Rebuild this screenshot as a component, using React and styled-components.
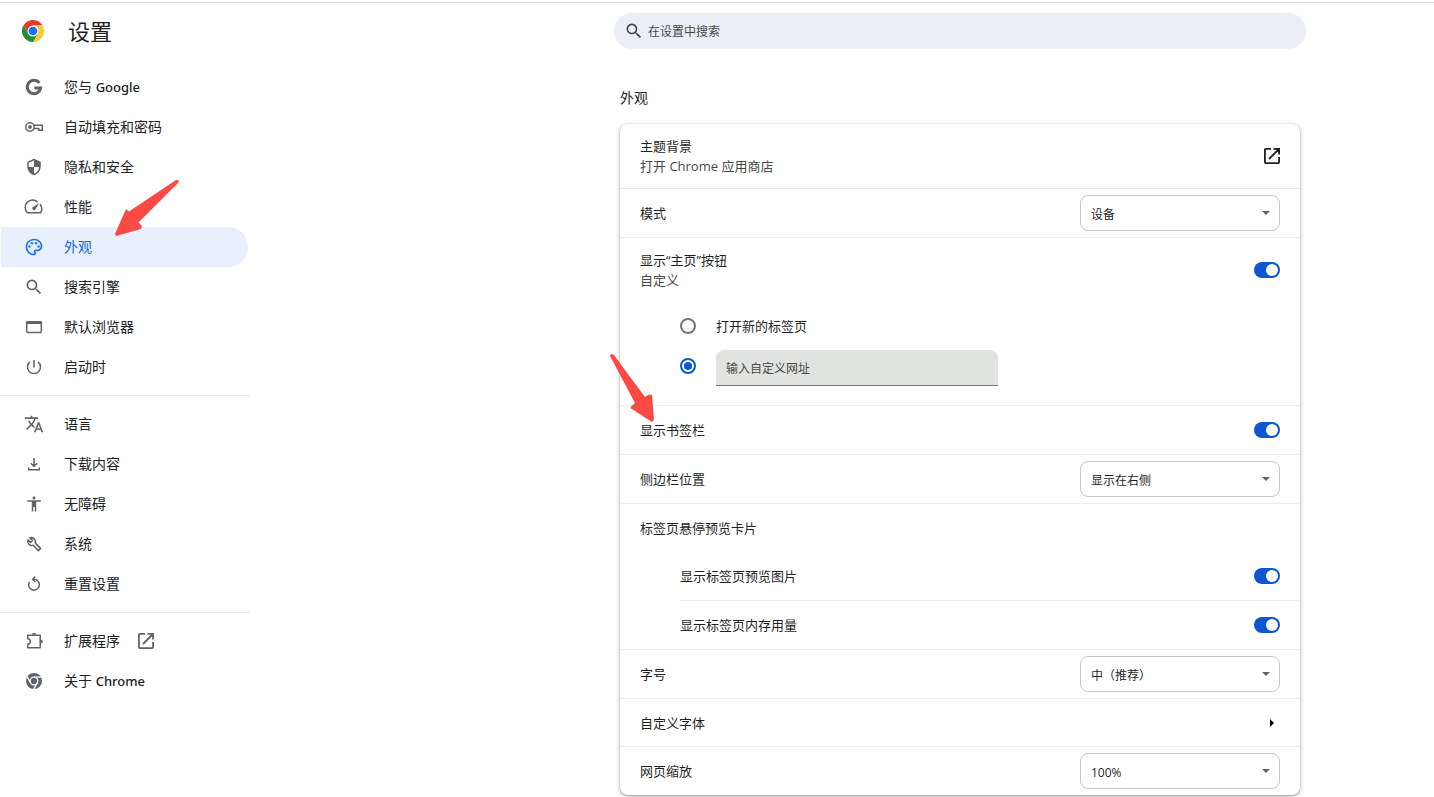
import React, { useState } from 'react';
import styled, { createGlobalStyle } from 'styled-components'
import { MdSecurity, MdOutlinePalette, MdSearch, MdTranslate, MdAccessibility } from 'react-icons/md'

const GlobalStyle = createGlobalStyle`
  * {
    box-sizing: border-box;
  }

  body {
    margin: 0;
    background: #fff;
    color: #1f1f1f;
    font-family: "Open Sans", "Noto Sans CJK SC", sans-serif;
    font-size: 13px;
    line-height: 20px;
  }

  button, input, select {
    font-family: inherit;
    color: inherit;
  }
`

//icons
const LineIcon = ({ children, strokeWidth = 1.5 }) => (
  <svg viewBox="0 0 20 20" width="20" height="20" fill="none" stroke="currentColor" strokeWidth={strokeWidth}>
    {children}
  </svg>
)

const GoogleIcon = () => (
  <LineIcon strokeWidth={3}>
    <path d="M15.300 5.900A6.700 6.700 0 1 0 16.600 11.100H10.300" />
  </LineIcon>
)

const KeyIcon = () => (
  <LineIcon>
    <circle cx="6" cy="10" r="4.200" />
    <circle cx="6" cy="10" r="1.900" fill="currentColor" stroke="none" />
    <path d="M9.800 8.200H18.300V13.300H14.800V11.400H9.800" />
  </LineIcon>
)

const GaugeIcon = () => (
  <LineIcon>
    <path d="M16 7.200A7.300 7.300 0 0 1 16.600 15.700H3.400A7.300 7.300 0 0 1 13.600 5.100" />
    <path d="M15.300 6L11.500 12.300a1.700 1.700 0 1 1-2.500-2.200z" fill="currentColor" stroke="none" />
  </LineIcon>
)

const WindowIcon = () => (
  <LineIcon>
    <rect x="2.700" y="4.700" width="14.600" height="10.800" rx="1" />
    <path d="M2.500 5.500h15" strokeWidth="3" />
  </LineIcon>
)

const PowerIcon = () => (
  <LineIcon>
    <path d="M10 3v7.500M6 4.900a6.500 6.500 0 1 0 8 0" />
  </LineIcon>
)

const DownloadIcon = () => (
  <LineIcon>
    <path d="M10 4v8.500M6.800 9.200L10 12.400l3.200-3.200M4.700 13.500v2.200h10.600v-2.200" />
  </LineIcon>
)

const WrenchIcon = () => (
  <LineIcon>
    <path d="M3.900 5.900L6.500 8.500 8.500 6.500 5.900 3.900A4.200 4.200 0 0 1 11.300 9.100L16.600 14.400 14.400 16.600 9.100 11.300A4.200 4.200 0 0 1 3.900 5.900z" strokeLinejoin="round" />
  </LineIcon>
)

const ResetIcon = () => (
  <LineIcon>
    <path d="M9.500 5.300h.5a5.400 5.400 0 1 1-4.600 2.600M11.300 2.600L8.700 5.300l2.600 2.700" />
  </LineIcon>
)

const PuzzleIcon = () => (
  <LineIcon>
    <path d="M3.700 4.200H16.200V16.700H3.700V13a2.600 2.600 0 0 0 0-5.200z" strokeLinejoin="round" />
    <path d="M8 3.700a2 2 0 0 1 4 0zM16.700 8.400a2 2 0 0 1 0 4z" fill="currentColor" stroke="none" />
  </LineIcon>
)

const LaunchIcon = () => (
  <LineIcon strokeWidth={1.8}>
    <path d="M9 2.900H3.900a1 1 0 0 0-1 1V16.100a1 1 0 0 0 1 1H16.100a1 1 0 0 0 1-1V11M11.500 2.900h5.600v5.600M17 3L7 13" />
  </LineIcon>
)

const ChromeGreyIcon = () => (
  <svg viewBox="0 0 20 20" width="20" height="20">
    <circle cx="10" cy="10" r="8" fill="currentColor" />
    <circle cx="10" cy="10" r="3.800" fill="none" stroke="#fff" strokeWidth="1.300" />
    <path d="M10 6.200h7.300M6.700 11.900L3 5.700M13.300 11.900L9.700 18" stroke="#fff" strokeWidth="1.300" />
  </svg>
)

const ChromeLogo = () => (
  <svg viewBox="0 0 48 48" width="22" height="22">
    <path d="M24 12h20.800A24 24 0 0 0 3.200 12l10.400 18z" fill="#e33b2e" />
    <path d="M34.400 30L24 48A24 24 0 0 0 44.800 12H24z" fill="#fcc934" />
    <path d="M13.600 30L3.200 12A24 24 0 0 0 24 48l10.400-18z" fill="#1e8e3e" />
    <circle cx="24" cy="24" r="12" fill="#fff" />
    <circle cx="24" cy="24" r="9.500" fill="#1a73e8" />
  </svg>
)

const menuGroups = [
  [
    { id: "people", label: <>您与 <b>Google</b></>, icon: <GoogleIcon /> },
    { id: "autofill", label: "自动填充和密码", icon: <KeyIcon /> },
    { id: "privacy", label: "隐私和安全", icon: <MdSecurity size={18} /> },
    { id: "performance", label: "性能", icon: <GaugeIcon /> },
    { id: "appearance", label: "外观", icon: <MdOutlinePalette size={20} /> },
    { id: "search", label: "搜索引擎", icon: <MdSearch size={20} /> },
    { id: "browser", label: "默认浏览器", icon: <WindowIcon /> },
    { id: "startup", label: "启动时", icon: <PowerIcon /> },
  ],
  [
    { id: "languages", label: "语言", icon: <MdTranslate size={20} /> },
    { id: "downloads", label: "下载内容", icon: <DownloadIcon /> },
    { id: "accessibility", label: "无障碍", icon: <MdAccessibility size={18} /> },
    { id: "system", label: "系统", icon: <WrenchIcon /> },
    { id: "reset", label: "重置设置", icon: <ResetIcon /> },
  ],
  [
    { id: "extensions", label: "扩展程序", icon: <PuzzleIcon />, external: true },
    { id: "about", label: <>关于 <b>Chrome</b></>, icon: <ChromeGreyIcon /> },
  ],
]

const SelectBox = ({ id, options }) => (
  <SelectWrap>
    <Select id={id}>
      {options.map((option) => <option key={option}>{option}</option>)}
    </Select>
    <Caret viewBox="0 0 8 4"><path d="M0 0h8L4 4z" /></Caret>
  </SelectWrap>
)

const ToggleRow = ({ id, label, sub, ...rest }) => {
  const [on, setOn] = useState(true)

  return (
    <Row {...rest}>
      <label htmlFor={id}>
        {label}
        {sub && <SubText>{sub}</SubText>}
      </label>
      <Toggle id={id} type="checkbox" role="switch" checked={on} onChange={() => setOn(!on)} />
    </Row>
  )
}

const SelectRow = ({ id, label, options }) => (
  <Row>
    <label htmlFor={id}>{label}</label>
    <SelectBox id={id} options={options} />
  </Row>
)

const App = () => {

  const [active, setActive] = useState("appearance")
  const [homePage, setHomePage] = useState("custom")
  const [url, setUrl] = useState("")

  return (
    <>
      <GlobalStyle />
      <Page>
        <Sidebar>
          <Brand>
            <ChromeLogo />
            <h1>设置</h1>
          </Brand>
          <Menu>
            {menuGroups.map((group, index) => (
              <MenuGroup key={index}>
                {group.map(({ id, label, icon, external }) => (
                  <MenuItem key={id} href={`#${id}`} $active={id === active} onClick={() => setActive(id)}>
                    <MenuIcon>{icon}</MenuIcon>
                    <span>{label}</span>
                    {external && <LaunchIcon />}
                  </MenuItem>
                ))}
              </MenuGroup>
            ))}
            <MenuArrow viewBox="0 0 66 58">
              <path d="M62 1L15 32.500 12 30 1 55l1 2 25-7 1-3-3.500-3.500L65 3 64 1z" />
            </MenuArrow>
          </Menu>
        </Sidebar>

        <Main>
          <SearchBar>
            <MdSearch size={20} />
            <input type="search" aria-label="在设置中搜索" placeholder="在设置中搜索" />
          </SearchBar>

          <Section>
            <h2>外观</h2>
            <Card>
              <LinkRow $tall>
                <span>
                  主题背景
                  <SubText>打开 Chrome 应用商店</SubText>
                </span>
                <LaunchIcon />
              </LinkRow>
              <SelectRow id="mode" label="模式" options={["设备", "浅色", "深色"]} />
              <ToggleRow id="home" label="显示“主页”按钮" sub="自定义" $tall />
              <RadioList>
                <RadioRow>
                  <Radio id="newtab" type="radio" name="homepage" checked={homePage === "newtab"} onChange={() => setHomePage("newtab")} />
                  <label htmlFor="newtab">打开新的标签页</label>
                </RadioRow>
                <RadioRow>
                  <Radio type="radio" name="homepage" aria-label="输入自定义网址" checked={homePage === "custom"} onChange={() => setHomePage("custom")} />
                  <UrlInput type="text" aria-label="输入自定义网址" placeholder="输入自定义网址" value={url} onChange={(e) => setUrl(e.target.value)} />
                </RadioRow>
              </RadioList>
              <ToggleRow id="bookmarks" label="显示书签栏" />
              <SelectRow id="side" label="侧边栏位置" options={["显示在右侧", "显示在左侧"]} />
              <Row>标签页悬停预览卡片</Row>
              <SubRows>
                <ToggleRow id="preview" label="显示标签页预览图片" />
                <ToggleRow id="memory" label="显示标签页内存用量" />
              </SubRows>
              <SelectRow id="size" label="字号" options={["中（推荐）", "小", "大"]} />
              <LinkRow>
                自定义字体
                <Chevron viewBox="0 0 20 16"><path d="M8 4l4 4-4 4z" /></Chevron>
              </LinkRow>
              <SelectRow id="zoom" label="网页缩放" options={["100%", "110%", "125%"]} />
              <CardArrow viewBox="0 0 44 70">
                <path d="M1 1L3.500 1.500 35 44l4-2.500 3 .5L44 67l-2 2L21 55.500l0-2L25 50 0 3z" />
              </CardArrow>
            </Card>
          </Section>
        </Main>
      </Page>
    </>
  )
}

export default App;

const Page = styled.div`
  display: grid;
  grid-template-columns: minmax(250px, 486px) minmax(0, 1fr);
  margin-top: 2px;
  border-top: 1px solid #e0e0e0;
`

const Sidebar = styled.aside`
  width: 250px;
`

const Brand = styled.header`
  display: flex;
  align-items: center;
  gap: 24px;
  height: 56px;
  padding-left: 22px;

  h1 {
    margin: 0;
    font-size: 22px;
    font-weight: 400;
    line-height: 28px;
  }
`

const Menu = styled.nav`
  position: relative;
  padding-top: 8px;
`

const MenuGroup = styled.div`
  & + & {
    margin-top: 8px;
    padding-top: 8px;
    border-top: 1px solid #e8e8e8;
  }
`

const MenuItem = styled.a`
  display: flex;
  align-items: center;
  height: 40px;
  margin: 0 2px 0 1px;
  padding-left: 23px;
  border-radius: 0 20px 20px 0;
  background: ${({ $active }) => $active ? "#e8f0fe" : "transparent"};
  color: ${({ $active }) => $active ? "#1967d2" : "#202124"};
  font-size: 14px;
  text-decoration: none;

  b {
    font-family: "Noto Sans", "Open Sans", sans-serif;
    font-size: 13px;
    font-weight: 500;
  }

  svg {
    color: ${({ $active }) => $active ? "#1a73e8" : "#5f6368"};
  }

  & > svg {
    margin-left: 16px;
  }
`

const MenuIcon = styled.span`
  display: flex;
  justify-content: center;
  width: 20px;
  margin-right: 20px;
`

const Arrow = styled.svg`
  position: absolute;
  fill: #f94a46;
  pointer-events: none;
`

const MenuArrow = styled(Arrow)`
  top: 120px;
  left: 114px;
  width: 66px;
`

const Main = styled.main`
  display: flex;
  flex-direction: column;
  align-items: center;
  padding: 10px 24px 2px;
`

const SearchBar = styled.div`
  display: flex;
  align-items: center;
  gap: 2px;
  width: 100%;
  max-width: 692px;
  height: 36px;
  padding: 0 10px;
  border-radius: 18px;
  background: #ebeef7;
  color: #474747;

  input {
    flex: 1;
    border: none;
    outline: none;
    background: none;
    font-size: 12px;
  }

  input::placeholder {
    color: #474747;
  }
`

const Section = styled.section`
  width: 100%;
  max-width: 680px;

  h2 {
    margin: 39px 0 16px;
    font-size: 14px;
    font-weight: 400;
    line-height: 20px;
  }
`

const Card = styled.div`
  position: relative;
  border-radius: 8px;
  background: #fff;
  box-shadow: 0 1px 2px rgba(60, 64, 67, .4), 0 1px 4px 1px rgba(60, 64, 67, .2);

  && > * + * {
    border-top: 1px solid #ececec;
  }
`

const CardArrow = styled(Arrow)`
  &&& {
    border: none;
  }

  top: 229px;
  left: -10px;
  width: 44px;
`

const Row = styled.div`
  display: flex;
  align-items: center;
  justify-content: space-between;
  min-height: ${({ $tall }) => $tall ? "65px" : "49px"};
  padding: 0 20px;
`

const LinkRow = styled.button`
  display: flex;
  align-items: center;
  justify-content: space-between;
  width: 100%;
  min-height: ${({ $tall }) => $tall ? "64px" : "48px"};
  padding: 0 20px;
  border: none;
  background: none;
  font-size: 13px;
  line-height: 20px;
  text-align: left;
  cursor: pointer;

  & > svg {
    margin-right: -2px;
  }
`

const SubText = styled.span`
  display: block;
  color: #474747;
`

const SubRows = styled.div`
  &&& {
    border-top: none;
  }

  padding-left: 60px;

  ${Row} {
    padding-left: 0;
  }

  ${Row}:first-child {
    min-height: 48px;
  }

  ${Row} + ${Row} {
    border-top: 1px solid #ececec;
  }
`

const Toggle = styled.input`
  appearance: none;
  width: 26px;
  height: 16px;
  margin: 0;
  padding: 2px;
  border-radius: 8px;
  background: ${({ checked }) => checked ? "#0b57d0" : "#747775"};
  cursor: pointer;

  &::before {
    content: "";
    display: block;
    width: 12px;
    height: 12px;
    margin-left: ${({ checked }) => checked ? "10px" : "0"};
    border-radius: 50%;
    background: #fff;
  }
`

const RadioList = styled.div`
  &&& {
    border-top: none;
  }

  padding: 4px 20px 19px 60px;
`

const RadioRow = styled.div`
  display: flex;
  align-items: center;
  gap: 20px;
  height: 40px;
`

const Radio = styled.input`
  appearance: none;
  width: 16px;
  height: 16px;
  margin: 0;
  padding: 2px;
  border: 2px solid ${({ checked }) => checked ? "#0b57d0" : "#747775"};
  border-radius: 50%;

  &::before {
    content: "";
    display: block;
    width: 8px;
    height: 8px;
    border-radius: 50%;
    background: ${({ checked }) => checked ? "#0b57d0" : "transparent"};
  }
`

const UrlInput = styled.input`
  align-self: flex-end;
  width: 282px;
  height: 36px;
  padding: 2px 10px 0;
  border: none;
  border-bottom: 1px solid #747775;
  border-radius: 8px 8px 0 0;
  outline: none;
  background: #e1e3e1;
  font-size: 12px;

  &::placeholder {
    color: #474747;
  }
`

const SelectWrap = styled.div`
  display: grid;
  align-items: center;
  width: 200px;
`

const Select = styled.select`
  grid-area: 1 / 1;
  appearance: none;
  height: 36px;
  padding: 2px 24px 0 10px;
  border: 1px solid #c7c7c7;
  border-radius: 8px;
  background: #fff;
  font-size: 12px;
`

const Caret = styled.svg`
  grid-area: 1 / 1;
  justify-self: end;
  width: 8px;
  height: 4px;
  margin-right: 10px;
  fill: #5f6368;
  pointer-events: none;
`

const Chevron = styled.svg`
  width: 20px;
  height: 16px;
`
